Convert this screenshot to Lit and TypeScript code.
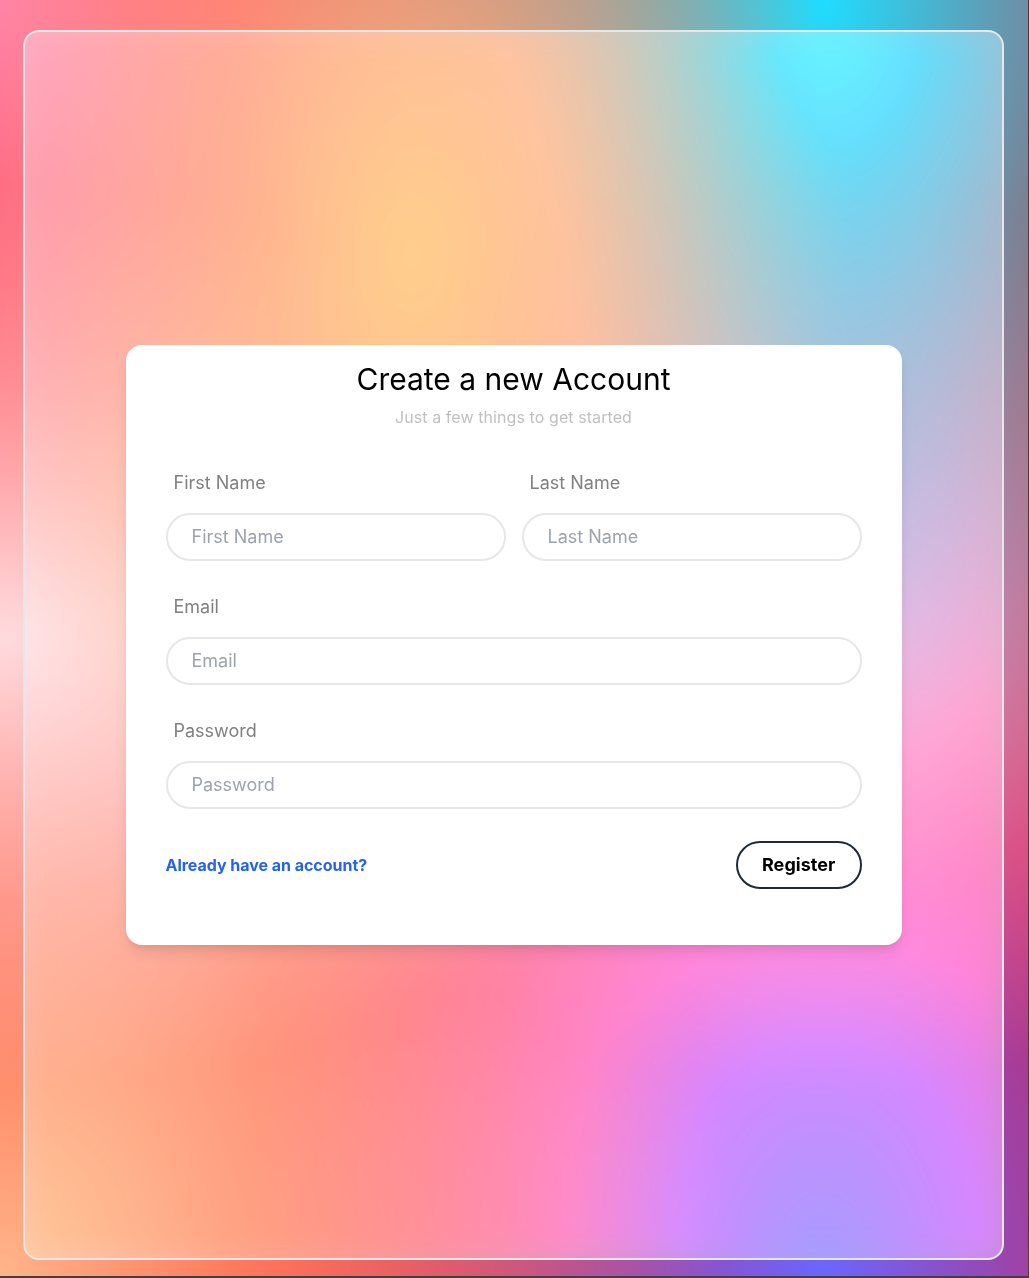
import { LitElement, html, css } from "lit";
import { customElement, property } from "lit/decorators.js";

@customElement("text-field")
class TextField extends LitElement {
  @property() label = "";
  @property() type = "text";

  static styles = css`
    :host { display: flex; flex-direction: column; flex: 1; min-width: 0; }
    .label {
      padding: 0 8px;
      height: 28px;
      line-height: 28px;
      font-size: 18px;
      color: #808080;
    }
    .input {
      box-sizing: border-box;
      width: 100%;
      height: 48px;
      margin: 16px 0 0;
      padding: 7px 24px 9px;
      border: 2px solid #e5e7eb;
      border-radius: 24px;
      background: #fff;
      font: inherit;
      font-size: 18px;
      line-height: 28px;
      color: #111827;
      outline: none;
    }
    .input::placeholder { color: #9ca3af; opacity: 1; }
  `;

  render() {
    return html`
      <label class="label" for="field">${this.label}</label>
      <input class="input" id="field" type=${this.type} placeholder=${this.label} />
    `;
  }
}

@customElement("app-root")
class AppRoot extends LitElement {
  static styles = css`
    :host {
      display: block;
      height: 1278px;
      background: #3f4045;
      font-family: Inter, "Liberation Sans", sans-serif;
    }
    .page {
      box-sizing: border-box;
      width: 1028px;
      height: 1276px;
      padding: 30px 24px 16px 23px;
      display: flex;
      background-color: #ff0000;
      background-image:
        radial-gradient(at 40% 20%, hsla(28, 100%, 74%, 1) 0px, transparent 50%),
        radial-gradient(at 80% 0%, hsla(189, 100%, 56%, 1) 0px, transparent 50%),
        radial-gradient(at 0% 50%, hsla(355, 100%, 93%, 1) 0px, transparent 50%),
        radial-gradient(at 80% 50%, hsla(340, 100%, 76%, 1) 0px, transparent 50%),
        radial-gradient(at 0% 100%, hsla(22, 100%, 77%, 1) 0px, transparent 50%),
        radial-gradient(at 80% 100%, hsla(242, 100%, 70%, 1) 0px, transparent 50%),
        radial-gradient(at 0% 0%, hsla(343, 100%, 76%, 1) 0px, transparent 50%);
    }
    .glass {
      box-sizing: border-box;
      flex: 1;
      display: flex;
      align-items: center;
      justify-content: center;
      border: 2px solid #e5e7eb;
      border-radius: 16px;
      background: rgba(255, 255, 255, 0.4);
      backdrop-filter: blur(16px) saturate(180%);
    }
    .card {
      box-sizing: border-box;
      width: 776px;
      height: 600px;
      padding: 16px 40px;
      border-radius: 16px;
      background: #fff;
      box-shadow: 0 10px 15px -3px rgba(0, 0, 0, 0.1), 0 4px 6px -2px rgba(0, 0, 0, 0.05);
    }
    .title {
      margin: 0;
      font-size: 30px;
      line-height: 36px;
      font-weight: 400;
      text-align: center;
      color: #000;
    }
    .subtitle {
      margin: 8px 0 0;
      font-size: 16px;
      line-height: 24px;
      letter-spacing: 0.08px;
      text-align: center;
      color: #c0c0c0;
    }
    .form { display: flex; flex-direction: column; gap: 32px; margin-top: 40px; }
    .row { display: flex; gap: 16px; }
    .actions { display: flex; align-items: center; justify-content: space-between; }
    .link {
      font-size: 16px;
      font-weight: 700;
      letter-spacing: -0.03px;
      color: #2563eb;
      text-decoration: none;
    }
    .button {
      box-sizing: border-box;
      height: 48px;
      padding: 8px 24px;
      border: 2px solid #1f2937;
      border-radius: 24px;
      background: #fff;
      font: inherit;
      font-size: 18px;
      line-height: 28px;
      font-weight: 700;
      letter-spacing: 0.05px;
      color: #000;
    }
  `;

  render() {
    return html`
      <div class="page">
        <main class="glass">
          <section class="card">
            <h1 class="title">Create a new Account</h1>
            <p class="subtitle">Just a few things to get started</p>
            <div class="form">
              <div class="row">
                <text-field label="First Name"></text-field>
                <text-field label="Last Name"></text-field>
              </div>
              <text-field label="Email" type="email"></text-field>
              <text-field label="Password" type="password"></text-field>
              <div class="actions">
                <a class="link" href="#">Already have an account?</a>
                <button class="button" type="button">Register</button>
              </div>
            </div>
          </section>
        </main>
      </div>
    `;
  }
}
